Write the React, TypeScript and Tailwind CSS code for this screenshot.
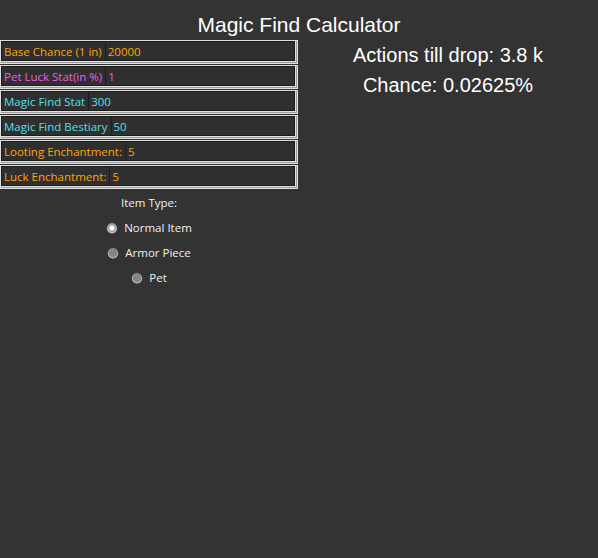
import { FC } from "react"

interface IField {
  label: string
  value: string
  color: string
}

const fields: IField[] = [
  { label: "Base Chance (1 in)", value: "20000", color: "text-[#ffa500]" },
  { label: "Pet Luck Stat(in %)", value: "1", color: "text-[#e65ff0]" },
  { label: "Magic Find Stat", value: "300", color: "text-[#50e0e8]" },
  { label: "Magic Find Bestiary", value: "50", color: "text-[#50e0e8]" },
  { label: "Looting Enchantment:", value: "5", color: "text-[#ffa500]" },
  { label: "Luck Enchantment:", value: "5", color: "text-[#ffa500]" },
]

const itemTypes = [
  { label: "Normal Item", checked: true },
  { label: "Armor Piece", checked: false },
  { label: "Pet", checked: false },
]

const Radio: FC<{ checked: boolean }> = ({ checked }) => (
  <svg width="12" height="12" viewBox="0 0 12 12">
    <circle cx="6" cy="6" r="5.6" fill="#4a4a4a" />
    <circle cx="6" cy="6.5" r="5" fill="#c4c4c4" />
    <circle cx="6" cy="6" r="4.4" fill={checked ? "#a0a0a0" : "#858585"} />
    {checked && <circle cx="6" cy="6" r="2.6" fill="#ffffff" />}
  </svg>
)

const FieldRow: FC<IField> = ({ label, value, color }) => (
  <div className="h-[24px] border border-[#e0e0e0]">
    <div className="h-full border-r border-b border-[#9c9c9c]">
      <div className="flex h-full border-r border-b border-[#e0e0e0]">
        <div className={`flex items-center border border-[#1c1c1c] bg-[#2f2f2f] pt-px pl-[2px] pr-[3px] ${color}`}>
          {label}
        </div>
        <div className={`flex flex-1 items-center border border-l-0 border-[#1c1c1c] bg-[#2f2f2f] pt-px pl-[2px] ${color}`}>
          {value}
        </div>
      </div>
    </div>
  </div>
)

const App: FC = () => {
  return (
    <div className="w-[598px] h-[558px] bg-[#333333] overflow-hidden">
      <div className="h-[40px] pt-[11px] text-center text-[21px] leading-[28px] text-white font-['Liberation_Sans',Arial,sans-serif]">
        Magic Find Calculator
      </div>
      <div className="flex">
        <div className="w-[298px] flex flex-col font-['Open_Sans',sans-serif] text-[11.5px]">
          <div className="flex flex-col gap-px">
            {fields.map((f) => (
              <FieldRow key={f.label} {...f} />
            ))}
          </div>
          <div className="flex flex-col text-[#f0f0f0] mt-px">
            <div className="h-[25px] flex items-center justify-center">Item Type:</div>
            {itemTypes.map(({ label, checked }) => (
              <div key={label} className="h-[25px] flex items-center justify-center gap-[6px]">
                <Radio checked={checked} />
                <span>{label}</span>
              </div>
            ))}
          </div>
        </div>
        <div className="flex-1 flex flex-col items-center text-white text-[20px] leading-[30px] font-['Liberation_Sans',Arial,sans-serif]">
          <div>Actions till drop: 3.8 k</div>
          <div>Chance: 0.02625%</div>
        </div>
      </div>
    </div>
  )
}

export default App
